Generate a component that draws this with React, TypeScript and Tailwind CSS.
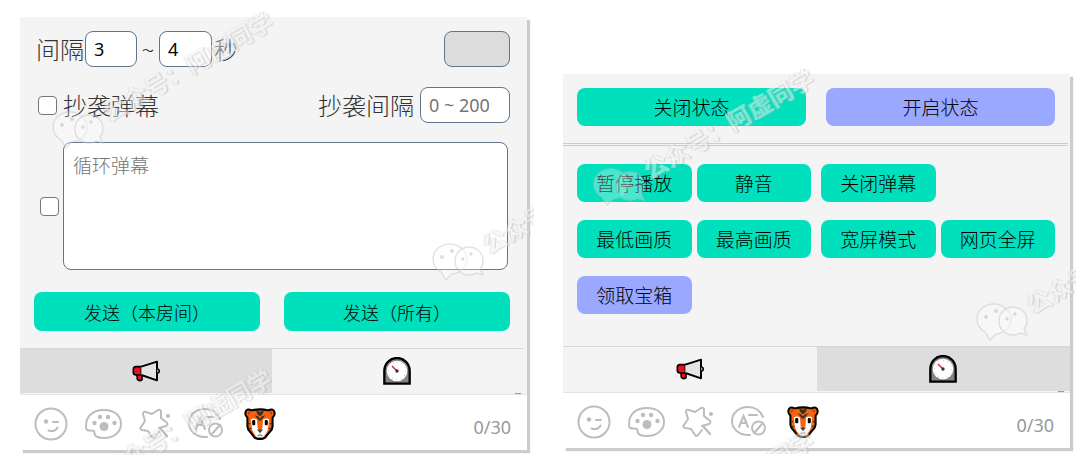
import { useState } from 'react'
import type { ReactNode } from 'react'

const fieldClass =
  'h-9 rounded-lg border border-slate-500 bg-white px-2 font-["Noto_Sans",sans-serif] text-lg font-normal text-black outline-none placeholder:text-[#757575]'

const checkboxClass =
  'size-[19px] shrink-0 appearance-none rounded border border-[#767676] bg-white checked:bg-[#00e0bd]'

function Watermark({ className }: { className: string }) {
  return (
    <div
      aria-hidden="true"
      className={`pointer-events-none absolute flex h-10 origin-[30px_20px] rotate-[-30deg] items-center whitespace-nowrap opacity-50 ${className}`}
    >
      <svg width="60" height="40" viewBox="0 0 60 40" className="rotate-30 overflow-visible">
        <g fill="#fff" fillOpacity="0.55" stroke="#c8c8c8" strokeWidth="1.4">
          <path d="M22 3c-10 0-17 7-17 15 0 6 3 10 8 13l5 8 6-6c9-1 15-7 15-15S31 3 22 3z" />
          <path d="M41 6c-8 0-14 6-14 14s6 14 14 14c3 0 5 0 7-2l7 2-3-6c2-2 3-5 3-8 0-8-6-14-14-14z" />
        </g>
        <g fill="#bdbdbd">
          <circle cx="14" cy="16" r="2" />
          <circle cx="24" cy="10" r="2" />
          <circle cx="35" cy="18" r="1.7" />
          <circle cx="43" cy="13" r="1.7" />
        </g>
      </svg>
      <span className="text-2xl leading-10 font-bold text-[#f3f3f3] [text-shadow:1px_1px_1px_#aaa,-1px_0_1px_#ccc]">
        公众号：阿虚同学
      </span>
    </div>
  )
}

function MegaphoneIcon() {
  return (
    <svg width="30" height="22" viewBox="0 0 90 66" strokeLinejoin="round">
      <path d="M18 44h15v15q-3 3-7 3t-7-4z" fill="#e81224" stroke="#000" strokeWidth="5" />
      <path d="M31 20H15Q7 20 7 28v9q0 8 8 8h16z" fill="#e81224" stroke="#000" strokeWidth="5" />
      <path d="M31 20L78 5v56L31 45z" fill="#e4e4e4" />
      <path d="M31 20L78 5v56L31 45" fill="none" stroke="#000" strokeWidth="6" />
      <path d="M79 26q6 2 6 7t-6 7" fill="#ddd" stroke="#000" strokeWidth="5" />
    </svg>
  )
}

function GaugeIcon() {
  return (
    <svg width="28" height="28" viewBox="0 0 84 84">
      <path d="M4 80V41a38 38 0 0 1 76 0v39z" fill="#858585" stroke="#000" strokeWidth="7" />
      <circle cx="42" cy="42" r="31" fill="#fff" />
      <circle cx="42" cy="42" r="26" fill="none" stroke="#aaa" strokeWidth="3" strokeDasharray="2 11.6" />
      <path d="M42 42L27 27" stroke="#e81224" strokeWidth="4" />
      <circle cx="42" cy="42" r="5" fill="#333" />
    </svg>
  )
}

function SmileIcon() {
  return (
    <svg width="34" height="34" viewBox="0 0 34 34" fill="none" stroke="#bdbdbd" strokeWidth="2" strokeLinecap="round">
      <circle cx="17" cy="17" r="15.5" />
      <circle cx="12" cy="14.5" r="2.2" fill="#bdbdbd" stroke="none" />
      <path d="M19 15h5M14.500 23.500q6.500 2 9-3" />
    </svg>
  )
}

function PaletteIcon() {
  return (
    <svg width="38" height="34" viewBox="0 0 38 34" fill="none" stroke="#bdbdbd" strokeWidth="2">
      <path d="M2 19C2 9 9 3 20 3s17 6 17 14-7 14-17 14c-5 0-8-1-9-3-1-1 0-3-1-4-1-1-5 0-7-1-1-1-1-2-1-4z" />
      <g fill="#bdbdbd" stroke="none">
        <circle cx="20" cy="19.500" r="4.500" />
        <circle cx="10.500" cy="16" r="2.200" />
        <circle cx="16" cy="10" r="2.200" />
        <circle cx="24" cy="10" r="2.200" />
        <circle cx="30.500" cy="16" r="2.200" />
      </g>
    </svg>
  )
}

function StarIcon() {
  return (
    <svg width="34" height="34" viewBox="0 0 34 34" fill="none" stroke="#bdbdbd" strokeWidth="2" strokeLinejoin="round" strokeLinecap="round">
      <path d="M21 25l-4 5q-2 2-3 0l-4-6-6-1q-3-1-1-3l4-6-2-7q0-3 3-2l6 2 6-4q3-1 3 2v6l5 4q3 2 0 4l-7 2" />
      <path d="M22 21l7 8" strokeWidth="2.400" />
      <circle cx="30" cy="9" r="2" fill="#bdbdbd" stroke="none" />
    </svg>
  )
}

function BlockWordIcon() {
  return (
    <svg width="36" height="34" viewBox="0 0 36 34" fill="none" stroke="#bdbdbd" strokeWidth="2" strokeLinecap="round">
      <path d="M32 12C29 5 24 2 17 2 8 2 1 8 1 16s7 14 16 14h2M18 10h8" />
      <path d="M8 22l4.500-11L17 22M10 18h5" />
      <circle cx="27.500" cy="23" r="6.500" />
      <path d="M23 28l9-10" />
    </svg>
  )
}

function TigerIcon() {
  return (
    <svg width="32" height="32" viewBox="0 0 92 94" strokeLinejoin="round">
      <path
        d="M22 7Q5-1 3 14q-1 8 6 14v26q0 8 9 17l12 16q16 9 31 0l13-16q9-9 9-17V28q7-6 6-14Q87-1 70 7q-24-6-48 0z"
        fill="#f7630c"
        stroke="#000"
        strokeWidth="6"
      />
      <path d="M10 12q4-5 9 0l-8 9zM82 12q-4-5-9 0l8 9z" fill="#b9460a" />
      <path d="M19 34q9-6 18 0l2 25 7 10 7-10 2-25q9-6 18 0l-4 30q-7 16-14 22H37Q29 79 23 64z" fill="#fff" />
      <path d="M34 7l12 4 12-4-5 12-7 5-7-5zM30 21l11 4 5 6 5-6 11-4-10 12-6 5-6-5z" fill="#333" />
      <path d="M10 42l9 4-9 3zM11 57l11 3-8 4zM82 42l-9 4 9 3zM81 57l-11 3 8 4z" fill="#333" />
      <rect x="23" y="35" width="9" height="16" rx="3" fill="#000" />
      <rect x="60" y="35" width="9" height="16" rx="3" fill="#000" />
      <path d="M37 63h18l-9 11z" fill="#444" />
      <path d="M39 82q7-6 14 0" fill="none" stroke="#888" strokeWidth="4" />
    </svg>
  )
}

function ActionButton({ children, tall, violet }: { children: ReactNode; tall?: boolean; violet?: boolean }) {
  return (
    <button
      type="button"
      className={`w-full rounded-lg text-black ${tall ? 'h-[39px] text-lg' : 'h-[38px] text-[19px]'} ${
        violet ? 'bg-[#9aa8ff]' : 'bg-[#00e0bd]'
      }`}
    >
      {children}
    </button>
  )
}

function PanelFooter({ initial, className = '' }: { initial: number; className?: string }) {
  const [active, setActive] = useState(initial)
  const tabs = [
    { label: '弹幕', icon: <MegaphoneIcon /> },
    { label: '控制', icon: <GaugeIcon /> },
  ]
  const tools = [
    { label: '表情', icon: <SmileIcon /> },
    { label: '颜色', icon: <PaletteIcon /> },
    { label: '特效', icon: <StarIcon /> },
    { label: '屏蔽', icon: <BlockWordIcon /> },
  ]

  return (
    <>
      <div className={`relative flex ${className}`}>
        {tabs.map((tab, i) => (
          <button
            key={tab.label}
            type="button"
            aria-label={tab.label}
            onClick={() => setActive(i)}
            className={`flex h-[45px] flex-1 items-center justify-center border-t border-[#d6d6d6] ${
              active === i ? 'bg-[#ddd]' : 'bg-[#f4f4f4]'
            }`}
          >
            {tab.icon}
          </button>
        ))}
        <span className="absolute right-1.5 -bottom-px h-px w-1.5 bg-[#999]" />
      </div>
      <div className="mt-px flex h-14 items-center border-t border-[#e5e5e5] bg-white pt-0.5 pr-4 pl-3.5">
        <div className="flex items-center gap-4">
          {tools.map((tool) => (
            <button key={tool.label} type="button" aria-label={tool.label}>
              {tool.icon}
            </button>
          ))}
        </div>
        <button type="button" aria-label="斗鱼助手" className="ml-5">
          <TigerIcon />
        </button>
        <span className="ml-auto pt-1.5 font-['Noto_Sans',sans-serif] text-lg font-normal text-[#999]">0/30</span>
      </div>
    </>
  )
}

function DanmuPanel() {
  return (
    <section className="bg-[#f4f4f4] shadow-[3px_3px_1px_#ccc]">
      <div className="pt-3.5 pr-[17px] pb-[17px] pl-3.5">
        <div className="flex items-center pl-0.5 text-2xl text-[#333]">
          <label htmlFor="from">间隔</label>
          <input id="from" defaultValue="3" className={`ml-px w-[52px] ${fieldClass}`} />
          <span className="w-[22px] text-center">~</span>
          <input aria-label="最大间隔" defaultValue="4" className={`w-[53px] ${fieldClass}`} />
          <span className="ml-0.5">秒</span>
          <button
            type="button"
            aria-label="开关"
            className="ml-auto h-9 w-[66px] rounded-lg border border-slate-500 bg-[#dcdcdc]"
          />
        </div>

        <div className="mt-5 flex items-center pl-1 text-2xl text-[#333]">
          <input id="copy" type="checkbox" className={checkboxClass} />
          <label htmlFor="copy" className="ml-1.5">抄袭弹幕</label>
          <label htmlFor="copy-gap" className="ml-auto">抄袭间隔</label>
          <input id="copy-gap" placeholder="0 ~ 200" className={`ml-1.5 w-[90px] ${fieldClass}`} />
        </div>

        <div className="mt-[19px] flex items-center gap-1 pr-0.5 pl-1.5">
          <input type="checkbox" aria-label="启用循环弹幕" className={checkboxClass} />
          <textarea
            aria-label="循环弹幕"
            placeholder="循环弹幕"
            className="h-32 min-w-0 flex-1 resize-none rounded-lg border border-slate-500 bg-white px-[9px] py-2.5 text-[19px] leading-6 outline-none placeholder:text-[#757575]"
          />
        </div>

        <div className="mt-[22px] grid grid-cols-2 gap-6">
          <ActionButton tall>发送（本房间）</ActionButton>
          <ActionButton tall>发送（所有）</ActionButton>
        </div>
      </div>
      <PanelFooter initial={0} className="pr-1" />
    </section>
  )
}

function ControlPanel() {
  return (
    <section className="bg-[#f4f4f4] shadow-[3px_3px_1px_#ccc]">
      <div className="grid grid-cols-2 gap-5 pt-3.5 pr-[15px] pl-3.5">
        <ActionButton>关闭状态</ActionButton>
        <ActionButton violet>开启状态</ActionButton>
      </div>
      <hr className="mt-[17px] mr-0.5 border-t-3 border-double border-[#ccc]" />
      <div className="grid grid-cols-2 gap-x-2.5 gap-y-[18px] pt-[18px] pr-[15px] pb-8 pl-3.5">
        <div className="grid grid-cols-2 gap-[5px]">
          <ActionButton>暂停播放</ActionButton>
          <ActionButton>静音</ActionButton>
        </div>
        <div className="grid grid-cols-2 gap-[5px]">
          <ActionButton>关闭弹幕</ActionButton>
        </div>
        <div className="grid grid-cols-2 gap-[5px]">
          <ActionButton>最低画质</ActionButton>
          <ActionButton>最高画质</ActionButton>
        </div>
        <div className="grid grid-cols-2 gap-[5px]">
          <ActionButton>宽屏模式</ActionButton>
          <ActionButton>网页全屏</ActionButton>
        </div>
        <div className="grid grid-cols-2 gap-[5px]">
          <ActionButton violet>领取宝箱</ActionButton>
        </div>
      </div>
      <PanelFooter initial={1} />
    </section>
  )
}

export default function App() {
  return (
    <main className="flex items-start gap-1.5 bg-white pr-[15px] font-[KaiTi,'Noto_Sans_CJK_SC',sans-serif] font-light">
      <div className="relative min-w-0 flex-1 overflow-hidden pt-[17px] pr-[7px] pb-[5px] pl-5">
        <DanmuPanel />
        <Watermark className="top-[109px] left-[48px]" />
        <Watermark className="top-[241px] left-[428px]" />
        <Watermark className="top-[466px] left-[47px]" />
      </div>
      <div className="relative min-w-0 flex-1 overflow-hidden pt-[74px] pr-1.5 pb-1.5 pl-[23px]">
        <ControlPanel />
        <Watermark className="top-[166px] left-[49px]" />
        <Watermark className="top-[301px] left-[432px]" />
        <Watermark className="top-[528px] left-[49px]" />
      </div>
    </main>
  )
}
